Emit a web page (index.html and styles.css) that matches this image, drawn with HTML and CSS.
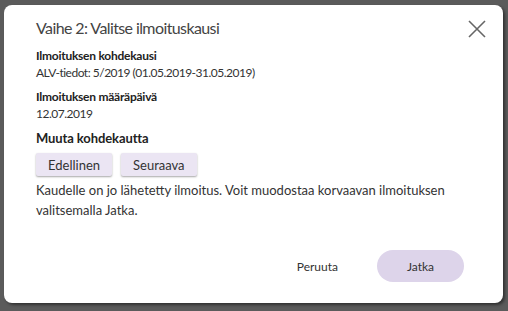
FILE: index.html
```html
<!DOCTYPE html>
<html lang="fi">
<head>
<meta charset="utf-8">
<title>Vaihe 2: Valitse ilmoituskausi</title>
<link rel="stylesheet" href="styles.css">
</head>
<body>
<div class="dialog">
  <header class="head">
    <h1 class="title">Vaihe 2: Valitse ilmoituskausi</h1>
    <button class="close" aria-label="Sulje">
      <svg width="18" height="18" viewBox="0 0 18 18"><path d="M1 1 L17 17 M17 1 L1 17" stroke="#666" stroke-width="1.6" fill="none"/></svg>
    </button>
  </header>
  <div class="content">
    <div class="field">
      <div class="label">Ilmoituksen kohdekausi</div>
      <div class="value">ALV-tiedot: 5/2019 (01.05.2019-31.05.2019)</div>
    </div>
    <div class="field">
      <div class="label">Ilmoituksen määräpäivä</div>
      <div class="value">12.07.2019</div>
    </div>
    <div class="label big">Muuta kohdekautta</div>
    <div class="nav">
      <button class="navbtn">Edellinen</button>
      <button class="navbtn">Seuraava</button>
    </div>
    <p class="note">Kaudelle on jo lähetetty ilmoitus. Voit muodostaa korvaavan ilmoituksen valitsemalla Jatka.</p>
  </div>
  <footer class="foot">
    <button class="cancel">Peruuta</button>
    <button class="primary">Jatka</button>
  </footer>
</div>
</body>
</html>
```
FILE: styles.css
```css
html, body {
  margin: 0;
  padding: 0;
}
body {
  background: #5b5b5b;
  width: 508px;
  height: 311px;
  overflow: hidden;
  font-family: Lato, "Open Sans", sans-serif;
  color: #333;
  padding: 5px 0 0 4px;
  box-sizing: border-box;
}
.dialog {
  width: 499px;
  height: 298px;
  background: #fff;
  border-radius: 8px;
  box-shadow: 2px 2px 3px rgba(0,0,0,0.45);
  box-sizing: border-box;
  padding: 12px 17px 0 32px;
  display: flex;
  flex-direction: column;
}
.head {
  display: flex;
  justify-content: space-between;
  align-items: flex-start;
}
.title {
  margin: 0;
  font-size: 16px;
  line-height: 22px;
  letter-spacing: -0.6px;
  font-weight: 400;
  color: #444;
}
.close {
  border: 0;
  background: none;
  padding: 0;
  margin-top: 3px;
  width: 18px;
  height: 18px;
  display: block;
}
.close svg { display: block; }
.content {
  margin-top: 9px;
}
.field {
  margin-bottom: 7px;
}
.label {
  font-size: 12px;
  line-height: 16px;
  font-weight: 700;
  letter-spacing: -0.25px;
  color: #222;
}
.label.big {
  font-size: 13px;
  letter-spacing: -0.1px;
}
.value {
  font-size: 12px;
  line-height: 18px;
  letter-spacing: -0.5px;
}
.nav {
  display: flex;
  gap: 9px;
  margin-top: 7px;
}
.navbtn {
  font-family: inherit;
  font-size: 13px;
  color: #333;
  background: #ebe5f3;
  border: 0;
  border-radius: 2px;
  box-shadow: 0 1px 2px rgba(0,0,0,0.35);
  height: 23px;
  padding: 0 12px;
}
.note {
  margin: 4px 0 0;
  font-size: 13px;
  line-height: 20px;
  color: #333;
}
.foot {
  margin-top: auto;
  margin-bottom: 21px;
  display: flex;
  justify-content: flex-end;
  align-items: center;
  gap: 39px;
  padding-right: 22px;
}
.cancel {
  font-family: inherit;
  font-size: 12px;
  color: #333;
  background: none;
  border: 0;
  padding: 0;
}
.primary {
  font-family: inherit;
  font-size: 12px;
  color: #333;
  background: #ddd4ea;
  border: 0;
  border-radius: 16px;
  width: 87px;
  height: 32px;
}
```
